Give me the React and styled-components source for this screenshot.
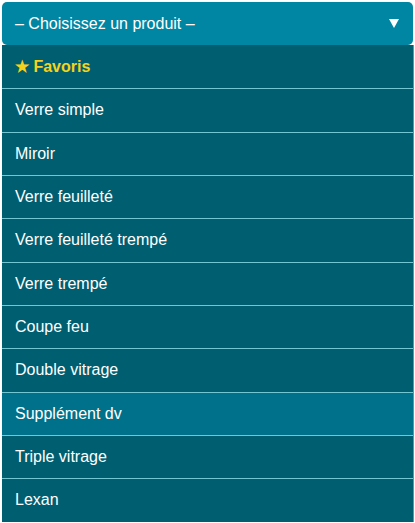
import React from "react";
import styled, { createGlobalStyle } from "styled-components";

const Global = createGlobalStyle`
  html, body { margin: 0; padding: 0; background: #ffffff; }
  body { font-family: "Liberation Sans", Arial, sans-serif; }
`;

const Wrapper = styled.div`
  padding: 2px 1px 0 2px;
  width: 415px;
  box-sizing: border-box;
`;

const Trigger = styled.div`
  height: 43px;
  box-sizing: border-box;
  display: flex;
  align-items: center;
  justify-content: space-between;
  padding: 0 14px 0 13px;
  margin-right: 1px;
  background: #0086a2;
  border-radius: 5px;
  color: #ffffff;
  font-size: 16px;
`;

const Arrow = styled.svg`
  width: 10px;
  height: 9px;
  display: block;
`;

const List = styled.ul`
  list-style: none;
  margin: 0;
  padding: 1px 0 0;
  background: #005e71;
  border-right: 1px solid #3aa7bb;
`;

const Option = styled.li`
  padding: 12px 13px;
  line-height: 18.33px;
  font-size: 16px;
  color: ${(p) => (p.$fav ? "#f7d21a" : "#ffffff")};
  font-weight: ${(p) => (p.$fav ? 700 : 400)};
  background: ${(p) => (p.$active ? "#00718a" : "transparent")};
  border-top: ${(p) => (p.$first ? "none" : "1px solid #74c6d3")};
`;

const items = [
  "Verre simple",
  "Miroir",
  "Verre feuilleté",
  "Verre feuilleté trempé",
  "Verre trempé",
  "Coupe feu",
  "Double vitrage",
  "Supplément dv",
  "Triple vitrage",
  "Lexan",
];

export default function App() {
  return (
    <>
      <Global />
      <Wrapper>
        <Trigger>
          <span>– Choisissez un produit –</span>
          <Arrow viewBox="0 0 10 9">
            <polygon points="0,0 10,0 5,9" fill="#ffffff" />
          </Arrow>
        </Trigger>
        <List>
          <Option $fav $first>★ Favoris</Option>
          {items.map((t) => (
            <Option key={t} $active={t === "Supplément dv"}>
              {t}
            </Option>
          ))}
        </List>
      </Wrapper>
    </>
  );
}
